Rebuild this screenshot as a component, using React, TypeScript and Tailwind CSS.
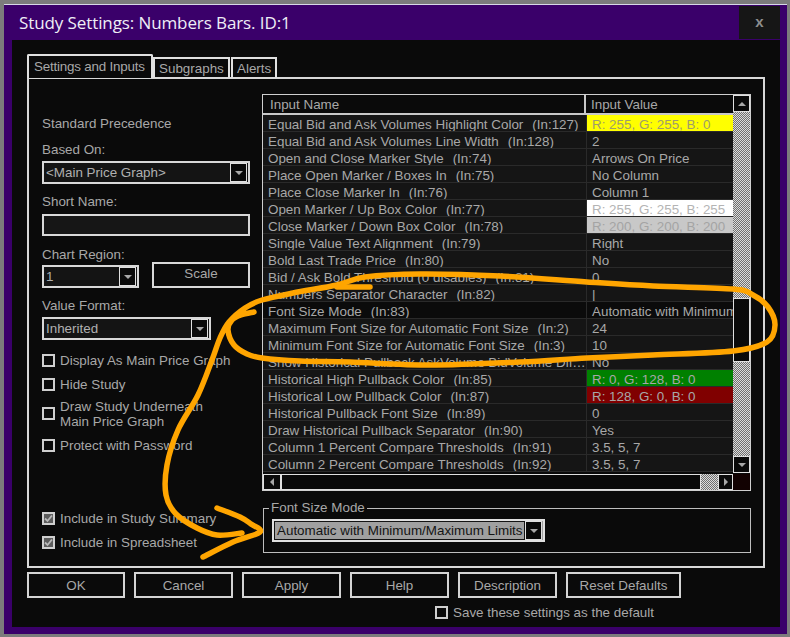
import React from 'react';

type Row = { name: string; tag: string; value: string; cell?: string; selected?: boolean };

const rows: Row[] = [
  { name: 'Equal Bid and Ask Volumes Highlight Color', tag: '(In:127)', value: 'R: 255, G: 255, B: 0', cell: 'bg-[#ffff00] text-[#a09c6c]' },
  { name: 'Equal Bid and Ask Volumes Line Width', tag: '(In:128)', value: '2' },
  { name: 'Open and Close Marker Style', tag: '(In:74)', value: 'Arrows On Price' },
  { name: 'Place Open Marker / Boxes In', tag: '(In:75)', value: 'No Column' },
  { name: 'Place Close Marker In', tag: '(In:76)', value: 'Column 1' },
  { name: 'Open Marker / Up Box Color', tag: '(In:77)', value: 'R: 255, G: 255, B: 255', cell: 'bg-[#ffffff] text-[#b4b4b4]' },
  { name: 'Close Marker / Down Box Color', tag: '(In:78)', value: 'R: 200, G: 200, B: 200', cell: 'bg-[#c8c8c8] text-[#a4a4a4]' },
  { name: 'Single Value Text Alignment', tag: '(In:79)', value: 'Right' },
  { name: 'Bold Last Trade Price', tag: '(In:80)', value: 'No' },
  { name: 'Bid / Ask Bold Threshold (0 disables)', tag: '(In:81)', value: '0' },
  { name: 'Numbers Separator Character', tag: '(In:82)', value: '|' },
  { name: 'Font Size Mode', tag: '(In:83)', value: 'Automatic with Minimum/Maximum Limits', selected: true },
  { name: 'Maximum Font Size for Automatic Font Size', tag: '(In:2)', value: '24' },
  { name: 'Minimum Font Size for Automatic Font Size', tag: '(In:3)', value: '10' },
  { name: 'Show Historical Pullback AskVolume BidVolume Difference', tag: '(In:84)', value: 'No' },
  { name: 'Historical High Pullback Color', tag: '(In:85)', value: 'R: 0, G: 128, B: 0', cell: 'bg-[#008000] text-[#a8a8a8]' },
  { name: 'Historical Low Pullback Color', tag: '(In:87)', value: 'R: 128, G: 0, B: 0', cell: 'bg-[#800000] text-[#a8a8a8]' },
  { name: 'Historical Pullback Font Size', tag: '(In:89)', value: '0' },
  { name: 'Draw Historical Pullback Separator', tag: '(In:90)', value: 'Yes' },
  { name: 'Column 1 Percent Compare Thresholds', tag: '(In:91)', value: '3.5, 5, 7' },
  { name: 'Column 2 Percent Compare Thresholds', tag: '(In:92)', value: '3.5, 5, 7' },
];

// small triangle glyphs for scroll / combo buttons
const Tri = ({ dir }: { dir: 'up' | 'down' | 'left' | 'right' }) => {
  const pts = {
    down: '0,0 8,0 4,4',
    up: '0,4 8,4 4,0',
    left: '4,0 4,8 0,4',
    right: '0,0 0,8 4,4',
  }[dir];
  const vert = dir === 'up' || dir === 'down';
  return (
    <svg width={vert ? 8 : 4} height={vert ? 4 : 8} viewBox={vert ? '0 0 8 4' : '0 0 4 8'}>
      <polygon points={pts} fill="#a8a8a8" />
    </svg>
  );
};

const ArrowBox = ({ dir, className = '' }: { dir: 'up' | 'down' | 'left' | 'right'; className?: string }) => (
  <div className={`border border-[#e0e0e0] bg-[#0a0a0a] flex items-center justify-center shrink-0 ${className}`}>
    <Tri dir={dir} />
  </div>
);

const Combo = ({ text, width }: { text: string; width: string }) => (
  <div className={`h-[23px] ${width} border-2 border-[#d8d8d8] bg-[#141414] flex items-center pl-[2px] pr-px`}>
    <span className="flex-1 truncate text-[#b0b0b0] leading-[18px]">{text}</span>
    <ArrowBox dir="down" className="w-[17px] h-[19px]" />
  </div>
);

const Check = ({ label, checked = false }: { label: React.ReactNode; checked?: boolean }) => (
  <div className="flex items-center gap-[5px]">
    <div
      className={`w-[13px] h-[13px] border-2 border-[#cfcfcf] flex items-center justify-center shrink-0 ${
        checked ? 'bg-[#5c5c5c]' : 'bg-[#0a0a0a]'
      }`}
    >
      {checked && (
        <svg width="9" height="9" viewBox="0 0 9 9">
          <path d="M1 4.5 L3.5 7 L8 1.5" stroke="#b8b8b8" strokeWidth="1.8" fill="none" />
        </svg>
      )}
    </div>
    <div className="text-[#a8a8a8] leading-[15px] pt-px">{label}</div>
  </div>
);

const Btn = ({ label, width }: { label: string; width: string }) => (
  <div className={`h-[26px] ${width} border-2 border-[#d4d4d4] bg-[#0a0a0a] flex items-center justify-center pt-px text-[#a8a8a8]`}>
    {label}
  </div>
);

// catmull-rom -> bezier for the hand-drawn marker strokes
const smooth = (p: number[][]) => {
  let d = `M${p[0][0]} ${p[0][1]}`;
  for (let i = 0; i < p.length - 1; i++) {
    const p0 = p[i - 1] || p[i];
    const p1 = p[i];
    const p2 = p[i + 1];
    const p3 = p[i + 2] || p2;
    const c1 = [p1[0] + (p2[0] - p0[0]) / 6, p1[1] + (p2[1] - p0[1]) / 6];
    const c2 = [p2[0] - (p3[0] - p1[0]) / 6, p2[1] - (p3[1] - p1[1]) / 6];
    d += ` C${c1[0]} ${c1[1]} ${c2[0]} ${c2[1]} ${p2[0]} ${p2[1]}`;
  }
  return d;
};

const loop = [
  [242, 533], [217, 535], [197, 528], [176, 514], [166, 495], [167, 465], [178, 430], [198, 395],
  [212, 360], [220, 338], [229, 322], [245, 308], [262, 300], [293, 293], [337, 285], [365, 277],
  [420, 274], [500, 276], [587, 282], [653, 286], [733, 289], [753, 295], [768, 307], [775, 325],
  [767, 342], [733, 351], [653, 355], [587, 358], [520, 362], [430, 365], [350, 362], [300, 361],
  [262, 358], [247, 354], [234, 345], [228, 330], [232, 320], [241, 315], [254, 312],
];
const hook = [[337, 287], [352, 287], [370, 287]];
const arrow = [[217, 508], [240, 517], [251, 524], [260, 532], [233, 542], [203, 557]];

export default function App() {
  return (
    <div className="relative w-[790px] h-[637px] bg-[#7c7c7c] pt-[4px] pl-[4px] pr-[3px] pb-[3px] overflow-hidden font-['Liberation_Sans',Arial,sans-serif] text-[13.4px] leading-[16px]">
      <div className="w-full h-full bg-[#3a006a] border-t border-[#d8d8e8] flex flex-col">
        {/* title bar */}
        <div className="h-[35px] flex items-stretch shrink-0">
          <div className="flex-1 pl-[15px] pt-px flex items-center text-[#eeeef6] text-[17px] font-['Open_Sans',sans-serif] tracking-[-0.1px]">
            Study Settings: Numbers Bars. ID:1
          </div>
          <div className="w-[41px] mt-[1px] mb-px mr-[7px] bg-[#161616] flex items-center justify-center text-[#8e8e8e] text-[15px] font-bold pb-[2px]">
            x
          </div>
        </div>

        {/* client area */}
        <div className="flex-1 mx-[8px] mr-[7px] mb-[7px] bg-[#0a0a0a] pl-[15px] pt-[14px] flex flex-col">
          {/* tabs */}
          <div className="flex items-end h-[24px] relative z-10 -mb-px">
            <div className="h-[24px] w-[126px] border-2 border-b-0 border-[#e0e0e0] rounded-t-[2px] bg-[#0a0a0a] pl-[5px] pt-[3px] text-[#a8a8a8] tracking-[-0.2px]">
              Settings and Inputs
            </div>
            <div className="h-[21px] w-[77px] border-2 border-b-0 border-[#e0e0e0] pl-[4px] pt-[2px] text-[#a8a8a8]">
              Subgraphs
            </div>
            <div className="h-[21px] w-[46px] ml-px border-2 border-b-0 border-[#e0e0e0] pl-[4px] pt-[2px] text-[#a8a8a8]">
              Alerts
            </div>
          </div>

          {/* tab panel */}
          <div className="w-[738px] h-[491px] border-2 border-[#d8d8d8] flex pl-[13px]">
            {/* left column */}
            <div className="w-[208px] flex flex-col text-[#a8a8a8]">
              <div className="mt-[37px]">Standard Precedence</div>
              <div className="mt-[10px]">Based On:</div>
              <div className="mt-[3px]">
                <Combo text="<Main Price Graph>" width="w-[208px]" />
              </div>
              <div className="mt-[10px]">Short Name:</div>
              <div className="mt-[4px] h-[22px] border-2 border-[#d8d8d8] bg-[#161616]" />
              <div className="mt-[11px]">Chart Region:</div>
              <div className="-mt-px flex items-end justify-between h-[26px]">
                <Combo text="1" width="w-[97px]" />
                <div className="w-[98px] h-[26px] border-2 border-[#d8d8d8] bg-[#0a0a0a] flex items-center justify-center pb-[2px]">
                  Scale
                </div>
              </div>
              <div className="mt-[10px]">Value Format:</div>
              <div className="mt-[3px]">
                <Combo text="Inherited" width="w-[169px]" />
              </div>
              <div className="mt-[12px]">
                <Check label="Display As Main Price Graph" />
              </div>
              <div className="mt-[8px]">
                <Check label="Hide Study" />
              </div>
              <div className="mt-[6px]">
                <Check
                  label={
                    <>
                      Draw Study Underneath
                      <br />
                      Main Price Graph
                    </>
                  }
                />
              </div>
              <div className="mt-[8px]">
                <Check label="Protect with Password" />
              </div>
              <div className="mt-[57px]">
                <Check label="Include in Study Summary" checked />
              </div>
              <div className="mt-[8px]">
                <Check label="Include in Spreadsheet" checked />
              </div>
            </div>

            {/* right column */}
            <div className="ml-[12px] w-[489px] flex flex-col">
              <div className="mt-[15px] h-[397px] border border-[#cfcfcf] flex flex-col">
                <div className="flex h-[379px]">
                  <div className="w-[470px] flex flex-col">
                    {/* header */}
                    <div className="h-[20px] flex border-b-2 border-[#c8c8c8] bg-[#0a0a0a] text-[#a8a8a8] shrink-0 leading-[20px]">
                      <div className="w-[323px] pl-[7px] border-r-2 border-[#c8c8c8]">Input Name</div>
                      <div className="flex-1 pl-[5px]">Input Value</div>
                    </div>
                    {rows.map((r, i) => (
                      <div
                        key={i}
                        className={`h-[17px] flex border-b border-[#2a2a2a] text-[#a8a8a8] leading-[19px] ${
                          r.selected ? 'bg-[#0b0b0b]' : 'bg-[#151515]'
                        }`}
                      >
                        <div className="w-[324px] pl-[5px] border-r border-[#2a2a2a] whitespace-nowrap overflow-hidden text-ellipsis">
                          {r.name}
                          {r.name.length < 50 ? <span className="ml-[9px]">{r.tag}</span> : null}
                        </div>
                        <div className={`flex-1 pl-[5px] whitespace-nowrap overflow-hidden ${r.cell ?? ''}`}>{r.value}</div>
                      </div>
                    ))}
                  </div>
                  {/* vertical scrollbar */}
                  <div className="w-[17px] flex flex-col bg-[repeating-conic-gradient(#707070_0%_25%,#dcdcdc_0%_50%)] bg-size-[2px_2px]">
                    <ArrowBox dir="up" className="h-[17px]" />
                    <div className="h-[186px]" />
                    <div className="h-[64px] border border-[#e0e0e0] bg-[#0a0a0a]" />
                    <div className="flex-1" />
                    <ArrowBox dir="down" className="h-[17px]" />
                  </div>
                </div>
                {/* horizontal scrollbar */}
                <div className="flex h-[16px] mt-px">
                  <div className="w-[470px] flex bg-[repeating-conic-gradient(#707070_0%_25%,#dcdcdc_0%_50%)] bg-size-[2px_2px]">
                    <ArrowBox dir="left" className="w-[18px]" />
                    <div className="w-[420px] border border-[#e0e0e0] bg-[#0a0a0a]" />
                    <div className="flex-1" />
                    <ArrowBox dir="right" className="w-[15px]" />
                  </div>
                  <div className="flex-1 bg-[#120202]" />
                </div>
              </div>

              {/* group box */}
              <div className="relative mt-[17px] ml-px h-[45px] border border-[#bdbdbd]">
                <div className="absolute -top-[9px] left-[5px] bg-[#0a0a0a] px-[2px] text-[#a8a8a8]">Font Size Mode</div>
                <div className="mt-[10px] ml-[8px] w-[273px] h-[23px] border-2 border-[#e0e0e0] bg-[#a0a0a0] flex items-center pr-px">
                  <div className="flex-1 h-full border border-[#141414] pl-[2px] flex items-center text-[#141414] leading-[18px] whitespace-nowrap overflow-hidden">
                    Automatic with Minimum/Maximum Limits
                  </div>
                  <ArrowBox dir="down" className="w-[17px] h-[19px]" />
                </div>
              </div>
            </div>
          </div>

          {/* dialog buttons */}
          <div className="mt-[4px] flex gap-[9px]">
            <Btn label="OK" width="w-[98px]" />
            <Btn label="Cancel" width="w-[99px]" />
            <Btn label="Apply" width="w-[99px]" />
            <Btn label="Help" width="w-[99px]" />
            <Btn label="Description" width="w-[99px]" />
            <Btn label="Reset Defaults" width="w-[115px]" />
          </div>
          <div className="mt-[6px] ml-[408px]">
            <Check label="Save these settings as the default" />
          </div>
        </div>
      </div>

      {/* hand-drawn annotation on top of the dialog */}
      <svg className="absolute inset-0 pointer-events-none" width="790" height="637" viewBox="0 0 790 637">
        <g stroke="#ffa500" strokeWidth="5.5" fill="none" strokeLinecap="round" strokeLinejoin="round">
          <path d={smooth(loop)} />
          <path d={smooth(hook)} />
          <path d={smooth(arrow)} />
        </g>
      </svg>
    </div>
  );
}
